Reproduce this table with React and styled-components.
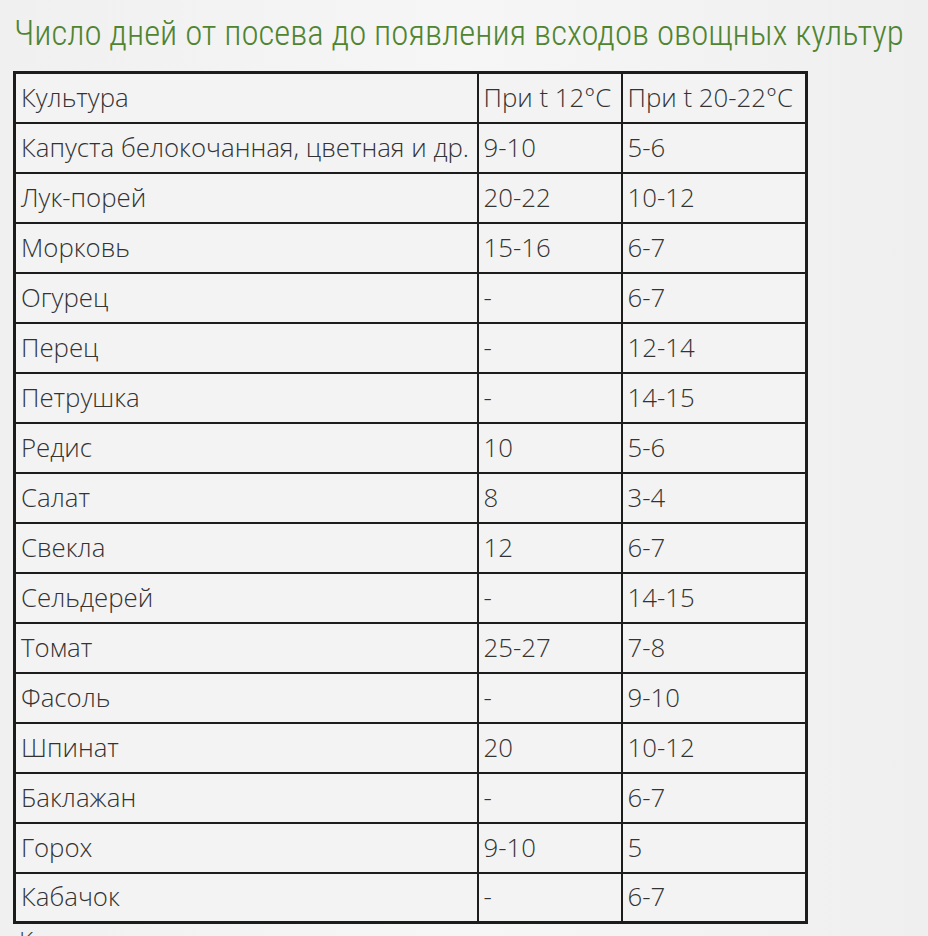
import React from 'react';
import styled, { createGlobalStyle } from 'styled-components';

const GlobalStyle = createGlobalStyle`
  html, body {
    margin: 0;
    padding: 0;
    background: #f2f2f2;
  }
`;

const rows = [
  ['Капуста белокочанная, цветная и др.', '9-10', '5-6'],
  ['Лук-порей', '20-22', '10-12'],
  ['Морковь', '15-16', '6-7'],
  ['Огурец', '-', '6-7'],
  ['Перец', '-', '12-14'],
  ['Петрушка', '-', '14-15'],
  ['Редис', '10', '5-6'],
  ['Салат', '8', '3-4'],
  ['Свекла', '12', '6-7'],
  ['Сельдерей', '-', '14-15'],
  ['Томат', '25-27', '7-8'],
  ['Фасоль', '-', '9-10'],
  ['Шпинат', '20', '10-12'],
  ['Баклажан', '-', '6-7'],
  ['Горох', '9-10', '5'],
  ['Кабачок', '-', '6-7'],
];

const Page = styled.div`
  width: 928px;
  height: 936px;
  overflow: hidden;
  padding: 12px 0 0 13px;
  box-sizing: border-box;
  background: linear-gradient(90deg, #f0f0f0 0%, #f6f6f6 50%, #efefef 100%);
  font-family: "Open Sans", "Liberation Sans", sans-serif;
`;

const Title = styled.h1`
  margin: 0 0 0 1px;
  height: 59px;
  font-family: "Liberation Sans Narrow", "Roboto Condensed", "Liberation Sans", sans-serif;
  font-weight: 300;
  font-size: 34.8px;
  line-height: 42px;
  color: #4f8530;
  white-space: nowrap;
`;

const Table = styled.table`
  border-collapse: collapse;
  border: 3px solid #1c1c1c;
  table-layout: fixed;
  width: 792px;
`;

const Cell = styled.td`
  box-sizing: border-box;
  height: 50px;
  padding: 0 0 0 5px;
  border: 2.5px solid #1c1c1c;
  background: #f3f3f3;
  color: #333;
  font-size: 25.8px;
  font-weight: 350;
  line-height: 1;
  white-space: nowrap;
  overflow: hidden;
  vertical-align: middle;
`;

const Tail = styled.div`
  margin: 1px 0 0 6px;
  font-size: 25px;
  font-weight: 350;
  line-height: 30px;
  color: #444;
`;

const widths = [463, 144, 185];

export default function App() {
  return (
    <Page>
      <GlobalStyle />
      <Title>Число дней от посева до появления всходов овощных культур</Title>
      <Table>
        <colgroup>
          {widths.map((w) => (
            <col key={w} style={{ width: w }} />
          ))}
        </colgroup>
        <tbody>
          <tr>
            <Cell>Культура</Cell>
            <Cell>При t 12°C</Cell>
            <Cell>При t 20-22°C</Cell>
          </tr>
          {rows.map((r) => (
            <tr key={r[0]}>
              {r.map((c, i) => (
                <Cell key={i}>{c}</Cell>
              ))}
            </tr>
          ))}
        </tbody>
      </Table>
      <Tail>К</Tail>
    </Page>
  );
}
